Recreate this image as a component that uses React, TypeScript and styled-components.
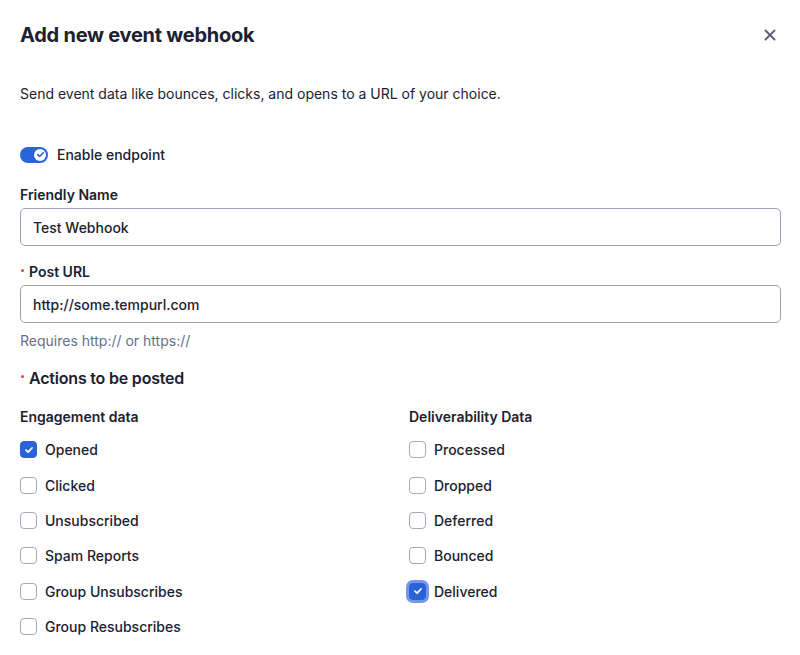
import React from "react";
import styled, { createGlobalStyle, css } from "styled-components";

const Global = createGlobalStyle`
  html, body { margin: 0; padding: 0; background: #fff; }
  body { font-family: Inter, "Noto Sans", sans-serif; color: #1b2130; -webkit-font-smoothing: antialiased; }
  * { box-sizing: border-box; }
`;

const Modal = styled.div`
  width: 800px;
  padding: 20px 19px 0 20px;
  display: flex;
  flex-direction: column;
`;

const Header = styled.div`
  display: flex;
  align-items: center;
  justify-content: space-between;
  height: 30px;
`;

const Title = styled.h1`
  margin: 0;
  font-size: 20px;
  font-weight: 700;
  letter-spacing: -0.25px;
  color: #1b2130;
`;

const CloseButton = styled.button`
  border: 0;
  background: none;
  padding: 0;
  width: 16px;
  height: 16px;
  margin-right: 3px;
  display: flex;
  align-items: center;
  justify-content: center;
  color: #5b6278;
`;

const Description = styled.p`
  margin: 34px 0 0;
  font-size: 14px;
  line-height: 20px;
  color: #1b2130;
`;

const ToggleRow = styled.label`
  display: flex;
  align-items: center;
  gap: 9px;
  margin-top: 42px;
  font-size: 14px;
  font-weight: 500;
`;

const Track = styled.span`
  width: 28px;
  height: 16px;
  border-radius: 8px;
  background: #2a62d8;
  position: relative;
  display: inline-block;
`;

const Knob = styled.span`
  position: absolute;
  right: 2px;
  top: 2px;
  width: 12px;
  height: 12px;
  border-radius: 50%;
  background: #fff;
  display: flex;
  align-items: center;
  justify-content: center;
`;

const Field = styled.div<{ $top: number }>`
  display: flex;
  flex-direction: column;
  margin-top: ${(p) => p.$top}px;
`;

const Label = styled.div<{ $required?: boolean; $big?: boolean }>`
  font-size: ${(p) => (p.$big ? 16 : 14)}px;
  font-weight: 600;
  line-height: 20px;
  letter-spacing: ${(p) => (p.$big ? "-0.2px" : "0")};
  color: #1b2130;
  display: flex;
  align-items: center;
  ${(p) =>
    p.$required &&
    css`
      &::before {
        content: "";
        width: 3px;
        height: 3px;
        border-radius: 50%;
        background: #e0473c;
        margin: 0 5px 0 1px;
        position: relative;
        top: -2px;
      }
    `}
`;

const Input = styled.input`
  margin-top: 3px;
  width: 100%;
  height: 38px;
  border: 1px solid #9ba2b8;
  border-radius: 5px;
  padding: 0 12px;
  font-family: Inter, "Noto Sans", sans-serif;
  font-size: 14px;
  font-weight: 500;
  color: #1b2130;
  outline: none;
  background: #fff;
`;

const Help = styled.div`
  margin-top: 8px;
  font-size: 14px;
  line-height: 20px;
  color: #667089;
`;

const Columns = styled.div`
  display: grid;
  grid-template-columns: 389px 1fr;
  margin-top: 19px;
`;

const Column = styled.div`
  display: flex;
  flex-direction: column;
`;

const ColTitle = styled.div`
  font-size: 14px;
  font-weight: 600;
  line-height: 20px;
  margin-bottom: 5px;
`;

const Option = styled.label`
  display: flex;
  align-items: center;
  gap: 8px;
  height: 35.4px;
  font-size: 14px;
  font-weight: 500;
  color: #1b2130;
`;

const Box = styled.span<{ $checked?: boolean; $focus?: boolean }>`
  width: 17px;
  height: 17px;
  border-radius: 4px;
  flex: none;
  display: flex;
  align-items: center;
  justify-content: center;
  border: 1.5px solid ${(p) => (p.$checked ? "#2a62d8" : "#a3aac0")};
  background: ${(p) => (p.$checked ? "#2a62d8" : "#fff")};
  ${(p) =>
    p.$focus &&
    css`
      box-shadow: 0 0 0 3px #7398e8;
    `}
`;

const Check = ({ size = 10 }: { size?: number }) => (
  <svg width={size} height={size} viewBox="0 0 10 10" fill="none">
    <path d="M2 5.2 L4.1 7.2 L8 3" stroke="currentColor" strokeWidth="1.8" strokeLinecap="round" strokeLinejoin="round" />
  </svg>
);

const CheckWhite = styled.span`
  color: #fff;
  display: flex;
`;
const CheckBlue = styled.span`
  color: #2a62d8;
  display: flex;
`;

type Item = { label: string; checked?: boolean; focus?: boolean };

const engagement: Item[] = [
  { label: "Opened", checked: true },
  { label: "Clicked" },
  { label: "Unsubscribed" },
  { label: "Spam Reports" },
  { label: "Group Unsubscribes" },
  { label: "Group Resubscribes" },
];
const deliverability: Item[] = [
  { label: "Processed" },
  { label: "Dropped" },
  { label: "Deferred" },
  { label: "Bounced" },
  { label: "Delivered", checked: true, focus: true },
];

const OptionList = ({ title, items }: { title: string; items: Item[] }) => (
  <Column>
    <ColTitle>{title}</ColTitle>
    {items.map((it) => (
      <Option key={it.label}>
        <Box $checked={it.checked} $focus={it.focus}>
          {it.checked && (
            <CheckWhite>
              <Check />
            </CheckWhite>
          )}
        </Box>
        {it.label}
      </Option>
    ))}
  </Column>
);

export default function App() {
  return (
    <>
      <Global />
      <Modal>
        <Header>
          <Title>Add new event webhook</Title>
          <CloseButton aria-label="Close">
            <svg width="12" height="12" viewBox="0 0 12 12">
              <path d="M1.5 1.5 L10.5 10.5 M10.5 1.5 L1.5 10.5" stroke="currentColor" strokeWidth="2" strokeLinecap="round" />
            </svg>
          </CloseButton>
        </Header>
        <Description>Send event data like bounces, clicks, and opens to a URL of your choice.</Description>
        <ToggleRow>
          <Track>
            <Knob>
              <CheckBlue>
                <Check size={9} />
              </CheckBlue>
            </Knob>
          </Track>
          Enable endpoint
        </ToggleRow>
        <Field $top={22}>
          <Label>Friendly Name</Label>
          <Input defaultValue="Test Webhook" />
        </Field>
        <Field $top={16}>
          <Label $required>Post URL</Label>
          <Input defaultValue="http://some.tempurl.com" />
          <Help>Requires http:// or https://</Help>
        </Field>
        <Field $top={17}>
          <Label $required $big>Actions to be posted</Label>
        </Field>
        <Columns>
          <OptionList title="Engagement data" items={engagement} />
          <OptionList title="Deliverability Data" items={deliverability} />
        </Columns>
      </Modal>
    </>
  );
}
